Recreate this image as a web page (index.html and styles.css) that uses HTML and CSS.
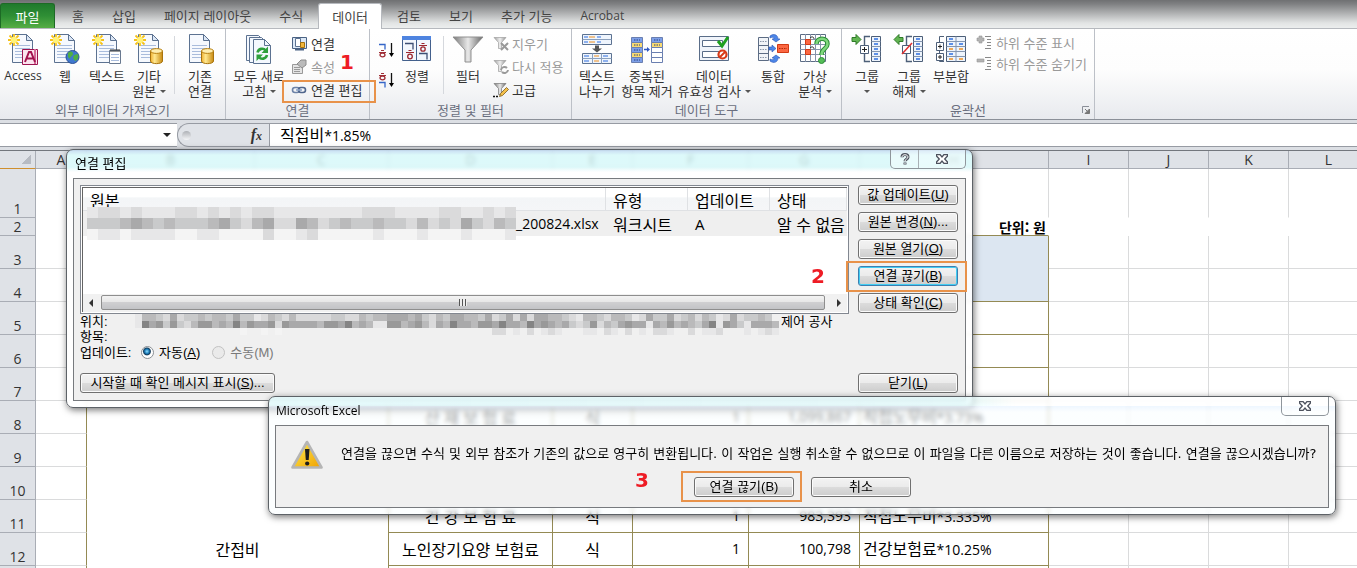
FILE: index.html
```html
<!DOCTYPE html>
<html lang="ko">
<head>
<meta charset="utf-8">
<title>Microsoft Excel</title>
<link rel="stylesheet" href="styles.css">
</head>
<body>
<svg class="defs" aria-hidden="true">
  <defs>
    <linearGradient id="g-gold" x1="0" x2="1"><stop offset="0" stop-color="#f0b030"/><stop offset=".35" stop-color="#ffe890"/><stop offset="1" stop-color="#c98a10"/></linearGradient>
    <linearGradient id="g-steel" x1="0" x2="1"><stop offset="0" stop-color="#777"/><stop offset=".5" stop-color="#e8e8e8"/><stop offset="1" stop-color="#666"/></linearGradient>
    <linearGradient id="g-warn" x1="0" y1="0" x2="1" y2="1"><stop offset="0" stop-color="#ffee50"/><stop offset="1" stop-color="#f0a000"/></linearGradient>
    <symbol id="page" viewBox="0 0 32 32">
      <path d="M5.500 1.500h14l6 6v22h-20z" fill="#f6f9fe" stroke="#5c7291"/>
      <path d="M19.500 1.500v6h6z" fill="#dbe6f5" stroke="#5c7291"/>
      <path d="M8 12.500h15M8 15.500h15M8 18.500h15M8 21.500h15M8 24.500h15" stroke="#a9bcdc"/>
    </symbol>
    <symbol id="spark" viewBox="0 0 32 32">
      <path d="M7 1v12M1 7h12M2.500 2.500l9 9M11.500 2.500l-9 9" stroke="#f5c11a" stroke-width="1.800"/>
      <circle cx="7" cy="7" r="3.200" fill="#fff27a"/>
    </symbol>
    <symbol id="drum" viewBox="0 0 32 32">
      <path d="M17.500 18v10c0 3.500 12 3.500 12 0v-10z" fill="url(#g-gold)" stroke="#a8730c"/>
      <ellipse cx="23.500" cy="18" rx="6" ry="2.400" fill="#ffeeb0" stroke="#b8800f"/>
    </symbol>
    <symbol id="funnel" viewBox="0 0 16 16">
      <path d="M1 1.500h12l-4.500 5v6h-3v-6z" fill="url(#g-steel)" stroke="#777" stroke-width=".7"/>
    </symbol>
    <symbol id="outline" viewBox="0 0 32 32">
      <path d="M19 3.500h-5.500v25h5.500" fill="none" stroke="#4d5f78" stroke-width="1.400"/>
      <path d="M20.500 3.500h9v25h-9z" fill="#eef4fc" stroke="#4d5f78"/>
      <path d="M20.500 8.500h9M20.500 13.500h9M20.500 18.500h9M20.500 23.500h9" stroke="#8496b0"/>
      <path d="M23 6h4M23 11h4M23 16h4M23 21h4M23 26h4" stroke="#2f6fe0" stroke-width="1.300"/>
      <path d="M9.500 12.500h8v8h-8z" fill="#fff" stroke="#4d5f78"/>
    </symbol>
    <symbol id="x-mark" viewBox="0 0 12 10">
      <path d="M.5.500h3.500l2 2.500 2-2.500h3.500v1.500l-2.800 3 2.800 3v1.500h-3.500l-2-2.500-2 2.500h-3.500v-1.500l2.800-3-2.800-3z" fill="#fff" stroke="#4d525e" stroke-width="1.300"/>
    </symbol>
  </defs>
</svg>

<div class="app">
  <nav class="tabs" aria-label="리본 탭">
    <button class="tab tab-file">파일</button>
    <button class="tab">홈</button>
    <button class="tab">삽입</button>
    <button class="tab">페이지 레이아웃</button>
    <button class="tab">수식</button>
    <button class="tab tab-active">데이터</button>
    <button class="tab">검토</button>
    <button class="tab">보기</button>
    <button class="tab">추가 기능</button>
    <button class="tab latin-tab">Acrobat</button>
  </nav>

  <section class="ribbon">
    <div class="group group-external">
      <div class="group-items">
        <button class="big"><svg class="icon" viewBox="0 0 32 32"><use href="#page"/><use href="#spark"/><path d="M15.500 16.500h15v15h-15z" fill="#fbe3ee" stroke="#9c1450"/><path d="M28 16v15" stroke="#d56a98" stroke-width="2"/><path d="M18 29l4-10h2l4 10M20 25.500h6" fill="none" stroke="#a3124f" stroke-width="2"/></svg><span class="latin-label">Access</span></button>
        <button class="big"><svg class="icon" viewBox="0 0 32 32"><use href="#page"/><use href="#spark"/><circle cx="23.500" cy="24" r="6.500" fill="#3f78cf" stroke="#2b4f94"/><path d="M19 20c3-3 5-1 5 1s-3 2-3 5l-2-2zM25 22l4-1c1 3 0 6-3 7l-2-3z" fill="#4fae45"/></svg><span>웹</span></button>
        <button class="big"><svg class="icon" viewBox="0 0 32 32"><use href="#page"/><use href="#spark"/><path d="M18.500 17.500h11v13h-11z" fill="#fff" stroke="#68788f"/><path d="M20 16v3M22 16v3M24 16v3M26 16v3M28 16v3" stroke="#333"/><path d="M20 21.500h8M20 24.500h8M20 27.500h8" stroke="#a9bcdc"/></svg><span>텍스트</span></button>
        <button class="big"><svg class="icon" viewBox="0 0 32 32"><use href="#page"/><use href="#spark"/><use href="#drum"/></svg><span>기타<br>원본 <i class="caret"></i></span></button>
        <span class="divider"></span>
        <button class="big"><svg class="icon" viewBox="0 0 32 32"><use href="#page"/><use href="#drum"/></svg><span>기존<br>연결</span></button>
      </div>
      <h2 class="group-title">외부 데이터 가져오기</h2>
    </div>

    <div class="group group-connect">
      <div class="group-items">
        <button class="big wide-62"><svg class="icon" viewBox="0 0 32 32"><g fill="#f4f8fe" stroke="#5c7291"><path d="M3.500 2.500h12l5 5v20h-17z"/><path d="M6.500 4.500h12l5 5v20h-17z"/><path d="M10.500 6.500h11l6 6v18h-17z"/><path d="M21.500 6.500v6h6z"/></g><path d="M14.500 19.500c1-4 6-5 8-2M24 22c-1 4-6 5-8 2" fill="none" stroke="#2fa03c" stroke-width="2.600"/><path d="M25 13.500v6.500h-6.500zM13.500 28v-6.500h6.500z" fill="#2fa03c"/></svg><span>모두 새로<br>고침 <i class="caret"></i></span></button>
        <div class="stack">
          <button class="small"><svg class="icon-sm" viewBox="0 0 16 16"><path d="M1.500 1.500h14v11h-14z" fill="#dce8f6" stroke="#4b6384"/><path d="M4 13.500h9" stroke="#4b6384" stroke-width="2"/><path d="M4.500 2.500h5v8h-5z" fill="#fff" stroke="#5c7291"/><path d="M9.500 6.500h4v5h-4z" fill="#f2b63c" stroke="#a8730c"/></svg>연결</button>
          <button class="small" disabled><svg class="icon-sm" viewBox="0 0 16 16"><path d="M1.500 5.500h10v9h-10z" fill="#e4e4e4" stroke="#999"/><path d="M3 8.500h6M3 10.500h6M3 12.500h6" stroke="#999"/><path d="M6 5l4-4h5v5l-4 3z" fill="#bbb" stroke="#8d8d8d"/></svg>속성</button>
          <button class="small marked marked-ribbon"><svg class="icon-sm" viewBox="0 0 16 16"><g fill="none" stroke-width="1.600"><rect x="1.500" y="5.500" width="7" height="5" rx="2.500" stroke="#6d83a8"/><rect x="7.500" y="5.500" width="7" height="5" rx="2.500" stroke="#4f658c"/><path d="M5 8h6" stroke="#8ea5c8"/></g></svg>연결 편집</button>
        </div>
      </div>
      <h2 class="group-title">연결</h2>
      <b class="step step-1">1</b>
    </div>

    <div class="group group-sort">
      <div class="group-items">
        <div class="sorts">
          <button class="sort" aria-label="오름차순 정렬"><svg viewBox="0 0 16 16"><path d="M1 2.500h6v5" fill="none" stroke="#3566c8" stroke-width="1.300"/><path d="M1 10.500h7M3 8.500h3" stroke="#a03038" stroke-width="1.200"/><ellipse cx="4.500" cy="13" rx="2.500" ry="1.800" fill="none" stroke="#a03038" stroke-width="1.300"/><path d="M13.500 1v11" stroke="#111" stroke-width="1.300"/><path d="M11 11h5l-2.500 4z"/></svg></button>
          <button class="sort" aria-label="내림차순 정렬"><svg viewBox="0 0 16 16"><path d="M1 3.500h7M3 1.500h3" stroke="#a03038" stroke-width="1.200"/><ellipse cx="4.500" cy="6" rx="2.500" ry="1.800" fill="none" stroke="#a03038" stroke-width="1.300"/><path d="M1 10.500h6v5" fill="none" stroke="#3566c8" stroke-width="1.300"/><path d="M13.500 1v11" stroke="#111" stroke-width="1.300"/><path d="M11 11h5l-2.500 4z"/></svg></button>
        </div>
        <button class="big"><svg class="icon" viewBox="0 0 32 32"><path d="M1.500 3.500h28v24h-28z" fill="#f3f7fd" stroke="#43608c"/><path d="M1 3h29v4H1z" fill="#4e84e0"/><path d="M15.500 7v21" stroke="#43608c"/><path d="M4 10.500h8v6" fill="none" stroke="#3d4f74" stroke-width="1.300"/><path d="M5 19.500h8M7.500 17.500h3M18 12.500h8M20.500 10.500h3" stroke="#9c2730" stroke-width="1.200"/><g fill="none" stroke="#9c2730" stroke-width="1.300"><circle cx="9" cy="23.500" r="2.300"/><circle cx="22" cy="16" r="2.200"/></g><path d="M18 20.500h8v6" fill="none" stroke="#3d4f74" stroke-width="1.300"/></svg><span>정렬</span></button>
        <span class="divider divider-wide"></span>
        <button class="big wide-38"><svg class="icon" viewBox="0 0 32 32"><path d="M1 4h30l-12 13v12h-6v-12z" fill="url(#g-steel)" stroke="#909090"/></svg><span>필터</span></button>
        <div class="stack stack-filter">
          <button class="small" disabled><svg class="icon-sm" viewBox="0 0 16 16"><use href="#funnel" opacity=".7"/><path d="M8 7l7 7M15 7l-7 7" stroke="#999" stroke-width="2"/></svg>지우기</button>
          <button class="small" disabled><svg class="icon-sm" viewBox="0 0 16 16"><use href="#funnel" opacity=".7"/><path d="M8 11a3.500 3.500 0 0 1 6-2M15 11a3.500 3.500 0 0 1-6 2" fill="none" stroke="#999" stroke-width="2"/></svg>다시 적용</button>
          <button class="small"><svg class="icon-sm" viewBox="0 0 16 16"><use href="#funnel"/><path d="M6.500 14.500l1-3 6-6 2 2-6 6z" fill="#f4c04a" stroke="#7a5a1c" stroke-width=".8"/><path d="M0 14.500h2M3 14.500h2" stroke="#111" stroke-width="1.400"/></svg>고급</button>
        </div>
      </div>
      <h2 class="group-title">정렬 및 필터</h2>
    </div>

    <div class="group group-tools">
      <div class="group-items">
        <button class="big"><svg class="icon" viewBox="0 0 32 32"><g fill="#eff5fd" stroke="#5c7291"><path d="M1.500 1.500h29v10h-29z"/><path d="M1.500 20.500h29v10h-29z"/></g><path d="M1.500 6.500h29M1.500 25.500h29M11.500 20.500v10M20.500 20.500v10" stroke="#8ba0bd"/><path d="M3 4h4M3 9h4M16 4h4M16 9h4M3 23h5M3 28h5M22 23h5M22 28h5" stroke="#2f6fe0" stroke-width="1.200"/><path d="M8 4h6M8 9h6M13 23h5M13 28h5" stroke="#f09020" stroke-width="1.200"/><path d="M14 12.500h4v3h3l-5 4-5-4h3z" fill="#555"/></svg><span>텍스트<br>나누기</span></button>
        <button class="big wide-58"><svg class="icon" viewBox="0 0 32 32"><g stroke="#6a7fb0"><path d="M.5 4.500h11v5h-11zM.5 14.500h11v5h-11zM.5 24.500h11v5h-11zM20.500 4.500h11v5h-11z" fill="#7d9fe8"/><path d="M.5 9.500h11v5h-11zM.5 19.500h11v5h-11zM20.500 9.500h11v5h-11z" fill="#f9da70"/><path d="M20.500 14.500h11v5h-11zM20.500 19.500h11v5h-11zM20.500 24.500h11v5h-11z" fill="#fff"/></g><path d="M3 7h6M3 12h6M3 17h6M3 22h6M3 27h6M23 7h6M23 12h6" stroke="#28407c" stroke-dasharray="1.500 1"/><path d="M13 16.500h4" stroke="#2f57c0" stroke-width="1.500"/><path d="M16 14l3 2.500-3 2.500z" fill="#2f57c0"/></svg><span>중복된<br>항목 제거</span></button>
        <button class="big wide-76"><svg class="icon" viewBox="0 0 32 32"><path d="M1.500 3.500h29v24h-29z" fill="#f0f4fa" stroke="#5a6d88"/><path d="M4.500 7.500h20v6h-20zM4.500 18.500h20v6h-20z" fill="#fff" stroke="#5a6d88"/><path d="M20 8l4 5 6-9" fill="none" stroke="#1fa01f" stroke-width="3"/><circle cx="24.500" cy="21.500" r="4" fill="#fff" stroke="#d83a17" stroke-width="2.200"/><path d="M22 24l5-5" stroke="#d83a17" stroke-width="2"/></svg><span>데이터<br>유효성 검사 <i class="caret"></i></span></button>
        <button class="big"><svg class="icon" viewBox="0 0 32 32"><path d="M1.500 4.500h10v23h-10z" fill="#f1f4f8" stroke="#5c6c84"/><path d="M1.500 12.500h10M1.500 20.500h10" stroke="#5c6c84"/><path d="M3 8.500h7M3 16.500h7M3 24.500h7" stroke="#8a97a9" stroke-dasharray="1.500 1"/><path d="M20.500 11.500h11v8h-11z" fill="#fb6742" stroke="#d23a14"/><path d="M22 15.500h8" stroke="#b02a08" stroke-dasharray="1.500 1"/><g fill="#4c86e8" stroke="#2a54b4" stroke-width=".6"><path d="M13 3c4-3 8-1 8 3h2l-4 3-4-3h2c0-2-2-2-4-1z"/><path d="M13 28c4 3 8 1 8-3h2l-4-3-4 3h2c0 2-2 2-4 1z"/><path d="M12 14h3v-2l4 3.500-4 3.500v-2h-3z"/></g></svg><span>통합</span></button>
        <button class="big"><svg class="icon" viewBox="0 0 32 32"><path d="M1.500 1.500h25v27h-25z" fill="#fff" stroke="#5c6c84"/><path d="M6.500 1v28M11.500 1v28M16.500 1v28M21.500 1v28M1 6.500h26M1 11.500h26M1 16.500h26M1 21.500h26" stroke="#8593a9"/><path d="M6.500 6.500h5v5h-5zM6.500 16.500h5v5h-5z" fill="#fb6742" stroke="#d23a14"/><path d="M11 5c2-2 4-1 4 1M11 15c2-2 4-1 4 1" fill="none" stroke="#222"/><path d="M17.500 11c0-7 11-7 11 0 0 5-6 4-6 11" fill="none" stroke="#2c8f35" stroke-width="4.500"/><path d="M17.500 11c0-7 11-7 11 0 0 5-6 4-6 11" fill="none" stroke="#7fd77d" stroke-width="2.500"/><circle cx="22.500" cy="27.500" r="3" fill="#55bd57" stroke="#2c8f35"/></svg><span>가상<br>분석 <i class="caret"></i></span></button>
      </div>
      <h2 class="group-title">데이터 도구</h2>
    </div>

    <div class="group group-outline">
      <div class="group-items">
        <button class="big"><svg class="icon" viewBox="0 0 32 32"><use href="#outline"/><path d="M11 16.500h5M13.500 14v5" stroke="#222"/><path d="M1 4.500h4v-3l5 5-5 5v-3h-4z" fill="#62b552" stroke="#2f7a28"/></svg><span>그룹<br><i class="caret"></i></span></button>
        <button class="big"><svg class="icon" viewBox="0 0 32 32"><use href="#outline"/><path d="M9 21l10-11" stroke="#e03030" stroke-width="1.500"/><path d="M10 4.500h-4v-3l-5 5 5 5v-3h4z" fill="#62b552" stroke="#2f7a28"/></svg><span>그룹<br>해제 <i class="caret"></i></span></button>
        <button class="big"><svg class="icon" viewBox="0 0 32 32"><path d="M9 3.500h-4.500v25h4.500" fill="none" stroke="#4d5f78"/><path d="M1.500 9.500h7v8h-7zM1.500 20.500h7v7h-7z" fill="#fff" stroke="#4d5f78"/><path d="M3 13.500h4M5 11.500v4M3 24h4M5 22v4" stroke="#222"/><path d="M11.500 3.500h19v25h-19z" fill="#eef4fc" stroke="#4d5f78"/><path d="M11.500 8.500h19M11.500 13.500h19M11.500 18.500h19M11.500 23.500h19M21 3.500v25" stroke="#8496b0"/><path d="M14 6h4M14 11h4M14 21h4M24 11h4" stroke="#2f6fe0" stroke-width="1.300"/><path d="M14 16h4M24 16h4M14 26h4M24 26h4" stroke="#f09020" stroke-width="1.300"/></svg><span>부분합</span></button>
        <div class="stack stack-outline">
          <button class="small" disabled><svg class="icon-sm" viewBox="0 0 16 16"><path d="M3 1h3v2h2v3h-2v2h-3v-2h-2v-3h2z" fill="#b3b3b3" stroke="#999" stroke-width=".6"/><path d="M9 1.500h6M11 4.500h4M11 7.500h4M11 10.500h4M9 13.500h6" stroke="#888"/></svg>하위 수준 표시</button>
          <button class="small" disabled><svg class="icon-sm" viewBox="0 0 16 16"><path d="M1 3h7v3h-7z" fill="#b3b3b3" stroke="#999" stroke-width=".6"/><path d="M9 1.500h6M11 4.500h4M11 7.500h4M11 10.500h4M9 13.500h6" stroke="#888"/></svg>하위 수준 숨기기</button>
        </div>
      </div>
      <h2 class="group-title">윤곽선</h2>
      <button class="launcher" aria-label="윤곽선 설정"><svg viewBox="0 0 8 8"><path d="M.5 7v-6.500h6.500" fill="none" stroke="#8a8f98"/><path d="M7.500 3v4.500h-4.500zM3 3l2.500 2.500" fill="#777" stroke="#777"/></svg></button>
    </div>
  </section>

  <div class="formula-bar">
    <button class="name-box" aria-label="이름 상자"><i class="caret caret-dark"></i></button>
    <div class="fx-area"><span class="knob"></span><i class="fx">f<small>x</small></i></div>
    <div class="formula">직접비<span class="latin">*1.85%</span></div>
  </div>

  <main class="sheet">
    <table class="grid">
      <colgroup><col class="c-head"><col class="c-a"><col class="c-b"><col class="c-c"><col class="c-d"><col class="c-e"><col class="c-f"><col class="c-g"><col class="c-h"><col class="c-n"><col class="c-n"><col class="c-n"><col></colgroup>
      <thead>
        <tr><th class="corner"></th><th>A</th><th>B</th><th>C</th><th>D</th><th>E</th><th>F</th><th>G</th><th>H</th><th>I</th><th>J</th><th>K</th><th>L</th></tr>
      </thead>
      <tbody>
        <tr class="r-tall"><th>1</th><td></td><td></td><td></td><td></td><td></td><td></td><td></td><td></td><td></td><td></td><td></td><td></td></tr>
        <tr class="r-short"><th>2</th><td></td><td colspan="7" class="unit">단위: 원</td><td></td><td></td><td></td><td></td></tr>
        <tr><th>3</th><td class="edge"></td><td colspan="7" rowspan="2" class="box fill"></td><td></td><td></td><td></td><td></td></tr>
        <tr><th>4</th><td class="edge"></td><td></td><td></td><td></td><td></td></tr>
        <tr><th>5</th><td class="edge"></td><td colspan="7" class="box"></td><td></td><td></td><td></td><td></td></tr>
        <tr><th>6</th><td class="edge"></td><td colspan="7" class="box"></td><td></td><td></td><td></td><td></td></tr>
        <tr><th>7</th><td class="edge"></td><td colspan="7" class="box"></td><td></td><td></td><td></td><td></td></tr>
        <tr><th>8</th><td class="edge"></td><td colspan="2" rowspan="9" class="box mid">간접비</td><td class="box mid">산 재 보 험 료</td><td class="box mid">식</td><td class="box num">1</td><td class="box num">1,099,867</td><td class="box">직접노무비<span class="latin">*3.73%</span></td><td></td><td></td><td></td><td></td></tr>
        <tr><th>9</th><td class="edge"></td><td class="box"></td><td class="box"></td><td class="box"></td><td class="box"></td><td class="box"></td><td></td><td></td><td></td><td></td></tr>
        <tr><th>10</th><td class="edge"></td><td class="box"></td><td class="box"></td><td class="box"></td><td class="box"></td><td class="box"></td><td></td><td></td><td></td><td></td></tr>
        <tr><th>11</th><td class="edge"></td><td class="box mid">건 강 보 험 료</td><td class="box mid">식</td><td class="box num">1</td><td class="box num">983,393</td><td class="box">직접노무비<span class="latin">*3.335%</span></td><td></td><td></td><td></td><td></td></tr>
        <tr><th>12</th><td class="edge"></td><td class="box mid">노인장기요양 보험료</td><td class="box mid">식</td><td class="box num">1</td><td class="box num">100,798</td><td class="box">건강보험료<span class="latin">*10.25%</span></td><td></td><td></td><td></td><td></td></tr>
        <tr><th></th><td class="edge"></td><td class="box"></td><td class="box"></td><td class="box"></td><td class="box"></td><td class="box"></td><td></td><td></td><td></td><td></td></tr>
        <tr><th></th><td class="edge"></td></tr>
        <tr><th></th><td class="edge"></td></tr>
        <tr><th></th><td class="edge"></td></tr>
      </tbody>
    </table>
  </main>

  <section class="dialog dialog-links" role="dialog" aria-labelledby="links-title">
    <header class="dialog-bar">
      <h1 id="links-title">연결 편집</h1>
      <div class="caption">
        <button class="cap-help" aria-label="도움말"><svg viewBox="0 0 12 12" width="12" height="12"><path d="M3 4.200c0-3.600 6-3.600 6 0 0 2-3 2-3 4M6 9.500v2" fill="none" stroke="#4d525e" stroke-width="3"/><path d="M3 4c0-3 6-3 6 0 0 2-3 2-3 4M6 10v1" fill="none" stroke="#fff"/></svg></button>
        <button class="cap-close" aria-label="닫기"><svg width="12" height="10"><use href="#x-mark"/></svg></button>
      </div>
    </header>
    <div class="dialog-body links-body">
      <div class="links-main">
        <div class="list">
          <div class="list-inner">
            <table class="links">
              <colgroup><col><col class="l-n"><col class="l-n"><col class="l-s"></colgroup>
              <thead><tr><th>원본</th><th>유형</th><th>업데이트</th><th>상태</th></tr></thead>
              <tbody><tr><td><span class="source"><svg class="mosaic" data-cell="11" aria-hidden="true" data-rows="eddedeeeddedededdeeeeeeeedddeeeeddeeded,cccbabcbcccbacdbaddabdcbccbccdbdcdacdbcd,feefeeeeffeeffffdffedfffffefffefffefffe"></svg><span class="latin">_200824.xlsx</span></span></td><td>워크시트</td><td class="latin">A</td><td>알 수 없음</td></tr></tbody>
            </table>
            <div class="scroll"><i class="arrow-left"></i><div class="thumb"><i class="grip"></i></div><i class="arrow-right"></i></div>
          </div>
        </div>
        <div class="side">
          <button class="push">값 업데이트(<u>U</u>)</button>
          <button class="push">원본 변경(<u>N</u>)...</button>
          <button class="push">원본 열기(<u>O</u>)</button>
          <button class="push push-focus marked marked-side">연결 끊기(<u>B</u>)</button>
          <button class="push">상태 확인(<u>C</u>)</button>
        </div>
      </div>
      <dl class="info">
        <div class="info-row"><dt>위치:</dt><dd><svg class="mosaic" data-cell="7" aria-hidden="true" data-rows="ebbcdadccbcbbcaccedbcdbdddddccddbcbbaaabacdbcaabbcadcadadaabbcdebbcdbbcedaccadcbdbcedadccbc,e8a9c9cdb99bab8b9aa9d9aaaab99a8babee99ba9bdab8aab99a8aab8a9abacdc9dbca9aaeab9babca8e9aceaaab,...............f..f.f..............................dd.e.d.ede...ee.de.d.e.dde..d.eed...e.ede"></svg>제어 공사</dd></div>
        <div class="info-row"><dt>항목:</dt><dd></dd></div>
        <div class="info-row info-mode"><dt>업데이트:</dt><dd><label><input type="radio" name="mode" checked>자동(<u>A</u>)</label><label class="off"><input type="radio" name="mode" disabled>수동(M)</label></dd></div>
      </dl>
      <div class="links-foot"><button class="push push-long">시작할 때 확인 메시지 표시(<u>S</u>)...</button><button class="push">닫기(<u>L</u>)</button></div>
      <b class="step step-2">2</b>
    </div>
  </section>

  <section class="dialog dialog-alert" role="alertdialog" aria-labelledby="alert-title">
    <header class="dialog-bar">
      <h1 id="alert-title" class="latin-title">Microsoft Excel</h1>
      <div class="caption"><button class="cap-close" aria-label="닫기"><svg width="12" height="10"><use href="#x-mark"/></svg></button></div>
    </header>
    <div class="dialog-body alert-body">
      <div class="message">
        <svg class="warn" viewBox="0 0 32 30"><path d="M16 2l14.500 25.500h-29z" fill="url(#g-warn)" stroke="#b5b5b5" stroke-width="2.600" stroke-linejoin="round"/><path d="M14 9h4.500l-.8 11h-2.900z" fill="#1c1c1c"/><circle cx="16.200" cy="23.500" r="2.100" fill="#1c1c1c"/></svg>
        <p>연결을 끊으면 수식 및 외부 참조가 기존의 값으로 영구히 변환됩니다. 이 작업은 실행 취소할 수 없으므로 이 파일을 다른 이름으로 저장하는 것이 좋습니다. 연결을 끊으시겠습니까?</p>
      </div>
      <div class="choices"><button class="push marked marked-alert">연결 끊기(B)</button><button class="push">취소</button></div>
      <b class="step step-3">3</b>
    </div>
  </section>
</div>
<script src="mosaic.js"></script>
</body>
</html>
```
FILE: styles.css
```css
* { box-sizing: border-box; }
body { margin: 0; font: 13px/15px "Noto Sans CJK KR", sans-serif; color: #333; }
button { font: inherit; color: inherit; background: none; border: 0; padding: 0; margin: 0; }
h1, h2, p, dl, dd, dt { margin: 0; font-size: inherit; font-weight: 400; }
svg { display: block; flex: none; }
table { border-collapse: separate; border-spacing: 0; table-layout: fixed; }
.defs { position: absolute; width: 0; height: 0; }
.app { position: relative; display: flex; flex-direction: column; height: 100vh; overflow: hidden; background: #fff; }
.latin { font-family: "Open Sans", sans-serif; font-size: 14px; }

/* ribbon tabs */
.tabs { flex: none; display: flex; align-items: flex-end; height: 29px; border-bottom: 1px solid #b6b9be; background: linear-gradient(#6f7072, #808183 15%, #e2e4e4 82%, #eceeee); }
.tab { height: 25px; padding: 0 14px; white-space: nowrap; color: #444; line-height: 23px; }
.tab-file { width: 55px; margin-right: 3px; color: #fff; border: 1px solid #1d6a25; border-bottom: 0; border-radius: 3px 3px 0 0; background: linear-gradient(#1f7a2c, #2f8f35 50%, #55ad45); }
.tab-active { height: 26px; margin: 0 1px -1px; padding: 0 13px; border: 1px solid #b6b9be; border-bottom: 0; border-radius: 3px 3px 0 0; background: #fff; }
.latin-tab, .latin-label { font-family: "Open Sans", sans-serif; font-size: 12px; }

/* ribbon groups */
.ribbon { flex: none; display: flex; height: 91px; border-bottom: 1px solid #8b9098; background: linear-gradient(#fff, #fdfdfd 45%, #e8eaee); }
.group { position: relative; flex: none; display: flex; flex-direction: column; border-right: 1px solid #bcc0c7; }
.group-items { display: flex; height: 72px; padding: 3px 0 0 2px; }
.group-title { text-align: center; color: #6b7080; line-height: 17px; }
.group-external { width: 226px; }
.group-connect { width: 144px; }
.group-sort { width: 202px; }
.group-tools { width: 270px; }
.group-outline { width: 253px; }
.group-sort .group-items { padding-left: 8px; }
.group-tools .group-items, .group-outline .group-items { padding-left: 4px; }
.big { display: flex; flex-direction: column; align-items: center; width: 42px; padding-top: 1px; gap: 3px; white-space: nowrap; line-height: 15px; }
.wide-38 { width: 38px; }
.wide-58 { width: 58px; }
.wide-62 { width: 62px; }
.wide-76 { width: 76px; }
.icon { width: 32px; height: 32px; }
.icon-sm { width: 16px; height: 16px; }
.caret { display: inline-block; vertical-align: 3px; border: 3px solid transparent; border-top-color: #555; border-bottom: 0; }
.caret-dark { border-width: 4px; border-bottom: 0; border-top-color: #222; }
.divider { width: 1px; height: 58px; margin: 4px 4px 0; background: #d5d8dd; }
.divider-wide { margin: 4px 5px 0; }
.stack { padding-left: 1px; }
.stack-filter { padding-left: 6px; }
.stack-outline { padding-left: 4px; }
.small { position: relative; display: flex; align-items: center; gap: 4px; height: 23px; line-height: 13px; white-space: nowrap; }
.stack-filter .small { gap: 3px; }
.stack-outline .small { height: 21px; }
.small:disabled { color: #9a9a9a; }
.sorts { display: flex; flex-direction: column; gap: 14px; width: 18px; padding-top: 10px; }
.sort svg { width: 16px; height: 16px; }
.launcher { position: absolute; right: 4px; bottom: 5px; }
.launcher svg { width: 8px; height: 8px; }

/* tutorial marks */
.marked { position: relative; }
.marked::after { content: ""; position: absolute; border: 2px solid #e8924a; }
.marked-ribbon::after { inset: 2px -14px -2px -9px; }
.marked-side::after { inset: -6px -10px -7px -13px; }
.marked-alert::after { inset: -7px -9px -6px -14px; }
.step { position: absolute; color: #ee1c25; font: bold 20px/20px "DejaVu Sans", sans-serif; }
.step-1 { left: 114px; top: 23px; }
.step-2 { left: 737px; top: 87px; }
.step-3 { left: 359px; top: 44px; }

/* formula bar */
.formula-bar { flex: none; display: flex; height: 31px; padding: 3px 0; border-bottom: 1px solid #73777d; background: #dcdfe4; }
.name-box { display: flex; align-items: center; justify-content: flex-end; width: 177px; padding-right: 6px; }
.name-box, .formula, .fx-area { border: solid #979ba3; border-width: 1px 0; }
.name-box, .formula { background: #fff; }
.fx-area { display: flex; align-items: center; justify-content: space-between; width: 92px; padding: 0 7px 0 4px; border-left-width: 1px; border-radius: 12px 0 0 12px; background: #e0e3e8; }
.knob { width: 9px; height: 9px; border-radius: 50%; background: linear-gradient(#aeb1b6, #f5f6f8); }
.fx { font: italic bold 16px/20px "Liberation Serif", serif; color: #333; }
.fx small { font-size: 12px; }
.formula { flex: 1; padding-left: 10px; border-left: 1px solid #979ba3; font-size: 16px; line-height: 20px; color: #000; }

/* worksheet */
.sheet { flex: 1; min-height: 0; overflow: hidden; }
.grid { width: 100%; min-width: 1369px; font-size: 16px; line-height: 18px; color: #000; }
.c-head { width: 36px; }
.c-a { width: 51px; }
.c-b { width: 168px; }
.c-c { width: 134px; }
.c-d { width: 164px; }
.c-e, .c-n { width: 80px; }
.c-f { width: 116px; }
.c-g { width: 111px; }
.c-h { width: 189px; }
.grid th { padding: 0; border: solid #a9adb5; border-width: 0 1px 1px 0; background: #dfe2e7; font: 14px/16px "Open Sans", sans-serif; color: #333; vertical-align: bottom; }
.grid thead th { height: 18px; line-height: 17px; }
.grid .corner { border-bottom-color: #cf8f2e; background: linear-gradient(135deg, #dfe2e7 50%, #b7bbc2 50%) 22px 4px / 9px 9px no-repeat #dfe2e7; }
.grid td { height: 33px; padding: 0 3px; border: solid #dadbdc; border-width: 0 1px 1px 0; white-space: nowrap; }
.grid .r-tall td { height: 49px; border-bottom-color: transparent; }
.grid .r-short td { height: 18px; line-height: 14px; border-color: transparent; }
.grid .r-short td.unit { padding-right: 2px; border-bottom-color: #948a54; font-size: 14px; font-weight: 700; text-align: right; }
.grid td.edge { border-right-color: #948a54; }
.grid td.box { border-color: #948a54; }
.grid td.fill { background: #dce6f1; }
.grid td.mid { text-align: center; }
.grid td.num { padding-right: 8px; text-align: right; font: 14px/20px "Open Sans", sans-serif; }

/* dialogs */
.dialog { position: absolute; padding: 0 6px 6px; border: 1px solid #5d6267; border-radius: 7px; color: #000; background: linear-gradient(rgba(200, 228, 255, .7), rgba(220, 255, 255, .78) 5px, rgba(220, 255, 255, .78) 17px, rgba(255, 255, 255, .88) 22px); backdrop-filter: blur(2px); box-shadow: 1px 2px 7px rgba(0, 0, 0, .55); font-family: "Liberation Sans", "Noto Sans CJK KR", sans-serif; }
.dialog-links { left: 66px; top: 149px; width: 907px; }
.dialog-alert { left: 268px; top: 396px; width: 1068px; background: linear-gradient(90deg, rgba(226, 253, 255, .75), rgba(226, 253, 255, .7) 65%, rgba(255, 255, 255, .85) 70%) 0 0 / 100% 9px no-repeat, linear-gradient(rgba(255, 255, 255, 0) 9px, rgba(226, 240, 255, .6) 9px, rgba(250, 254, 255, .6) 15px); }
.dialog-bar { display: flex; justify-content: space-between; height: 28px; }
.dialog-bar h1 { padding: 6px 0 0 2px; }
.dialog-bar .latin-title { padding-left: 1px; font: 12px/15px "Open Sans", sans-serif; }
.caption { display: flex; height: 19px; border: 1px solid #8f969c; border-top: 0; border-radius: 0 0 5px 5px; background: rgba(255, 255, 255, .35); }
.caption button { display: flex; align-items: center; justify-content: center; }
.cap-help { width: 28px; border-right: 1px solid #a9b0b5; }
.caption .cap-close { width: 46px; }
.dialog-body { position: relative; border: 1px solid #777a7e; background: #f0f0f0; }
.links-body { padding: 6px 7px 7px 6px; }
.links-main { display: grid; grid-template-columns: 1fr 100px; gap: 9px; }
.side { display: flex; flex-direction: column; gap: 7px; }
.push { width: 100px; height: 20px; border: 1px solid #707070; border-radius: 3px; background: linear-gradient(#f3f3f3, #ebebeb 49%, #dcdcdc 50%, #cdcdcd); box-shadow: inset 0 0 0 1px #fbfbfb; line-height: 16px; white-space: nowrap; }
.push-focus { border-color: #3c7fb1; box-shadow: inset 0 0 0 1px #43cdf2; }
.push-long { width: 195px; }

/* link list */
.list { height: 129px; padding: 1px; border: 1px solid #828790; background: #fff; }
.list-inner { display: flex; flex-direction: column; justify-content: space-between; height: 100%; border: solid #646464; border-width: 1px 0 0 1px; }
.links { width: 100%; font-size: 16px; line-height: 20px; text-align: left; font-family: "Noto Sans CJK KR", sans-serif; }
.l-n { width: 82px; }
.l-s { width: 77px; }
.links th { height: 23px; padding: 2px 0 0 7px; border: solid #dfe1e4; border-width: 0 1px 1px 0; background: linear-gradient(#fff 40%, #f3f5f7 45%, #f5f6f8); font-weight: 400; }
.links td { height: 25px; padding: 0 0 0 7px; background: #efefef; white-space: nowrap; }
.links td:first-child { padding-left: 4px; }
.links td.latin { font-size: 15px; font-family: "Open Sans", sans-serif; }
.source { display: flex; align-items: center; height: 24px; }
.scroll { display: flex; align-items: center; gap: 6px; height: 18px; padding: 0 6px 1px; background: #f1f1f1; }
.thumb { flex: 1; display: flex; align-items: center; justify-content: center; height: 15px; border: 1px solid #8e8e8e; border-radius: 2px; background: linear-gradient(#f3f3f3, #e6e6e6 48%, #cfcfd1 50%, #c2c3c6); }
.grip { width: 8px; height: 7px; background: repeating-linear-gradient(90deg, #555 0 1px, #eee 1px 3px); }
.arrow-left, .arrow-right { border: 4px solid transparent; }
.arrow-left { margin-right: 2px; border-left: 0; border-right-color: #333; }
.arrow-right { margin-left: 6px; border-right: 0; border-left-color: #333; }
.info-row { display: flex; height: 15px; line-height: 16px; }
.info-row dt { width: 55px; white-space: nowrap; }
.info-row dd { display: flex; gap: 2px; }
.info-mode { height: 17px; line-height: 17px; }
.info-mode dd { align-items: center; gap: 12px; padding-left: 6px; }
.info label { display: flex; align-items: center; }
.info input { appearance: none; width: 13px; height: 13px; margin: 0 5px 0 0; border: 1px solid #8a8f94; border-radius: 50%; background: #fff; }
.info input:checked { background: radial-gradient(circle at 45% 40%, #8fe0ff, #1a7ab8 25%, #123c5c 38%, #fff 50%); }
.info .off { color: #7a7a7a; }
.info .off input { border-color: #c2c2c2; background: #eaeaea; }
.links-foot { display: flex; justify-content: space-between; margin-top: 12px; }

/* confirmation */
.alert-body { padding: 14px 14px 10px 15px; }
.message { display: flex; align-items: center; gap: 18px; }
.message p { padding-bottom: 3px; font-family: "DejaVu Sans", "Noto Sans CJK KR", sans-serif; white-space: nowrap; }
.warn { width: 32px; height: 30px; }
.choices { display: flex; justify-content: center; gap: 17px; margin-top: 7px; }
```
FILE: mosaic.js
```js
// Draws the masked file names: each character is one cell's grey level, "." is empty.
document.querySelectorAll('.mosaic').forEach(function (svg) {
  var cell = Number(svg.dataset.cell);
  var rows = svg.dataset.rows.split(',');
  var tones = { f: '#f4f4f4', e: '#e7e7e8', d: '#dadadb', c: '#c9cacb', b: '#bababb', a: '#a9a9aa', 9: '#999', 8: '#848484' };
  svg.setAttribute('width', (cell === 7 ? 92 : 39) * cell);
  svg.setAttribute('height', rows.length * cell);
  rows.forEach(function (row, y) {
    Array.from(row).forEach(function (level, x) {
      if (level === '.') return;
      var rect = document.createElementNS('http://www.w3.org/2000/svg', 'rect');
      rect.setAttribute('x', x * cell);
      rect.setAttribute('y', y * cell);
      rect.setAttribute('width', cell);
      rect.setAttribute('height', cell);
      rect.setAttribute('fill', tones[level]);
      svg.appendChild(rect);
    });
  });
});
```
